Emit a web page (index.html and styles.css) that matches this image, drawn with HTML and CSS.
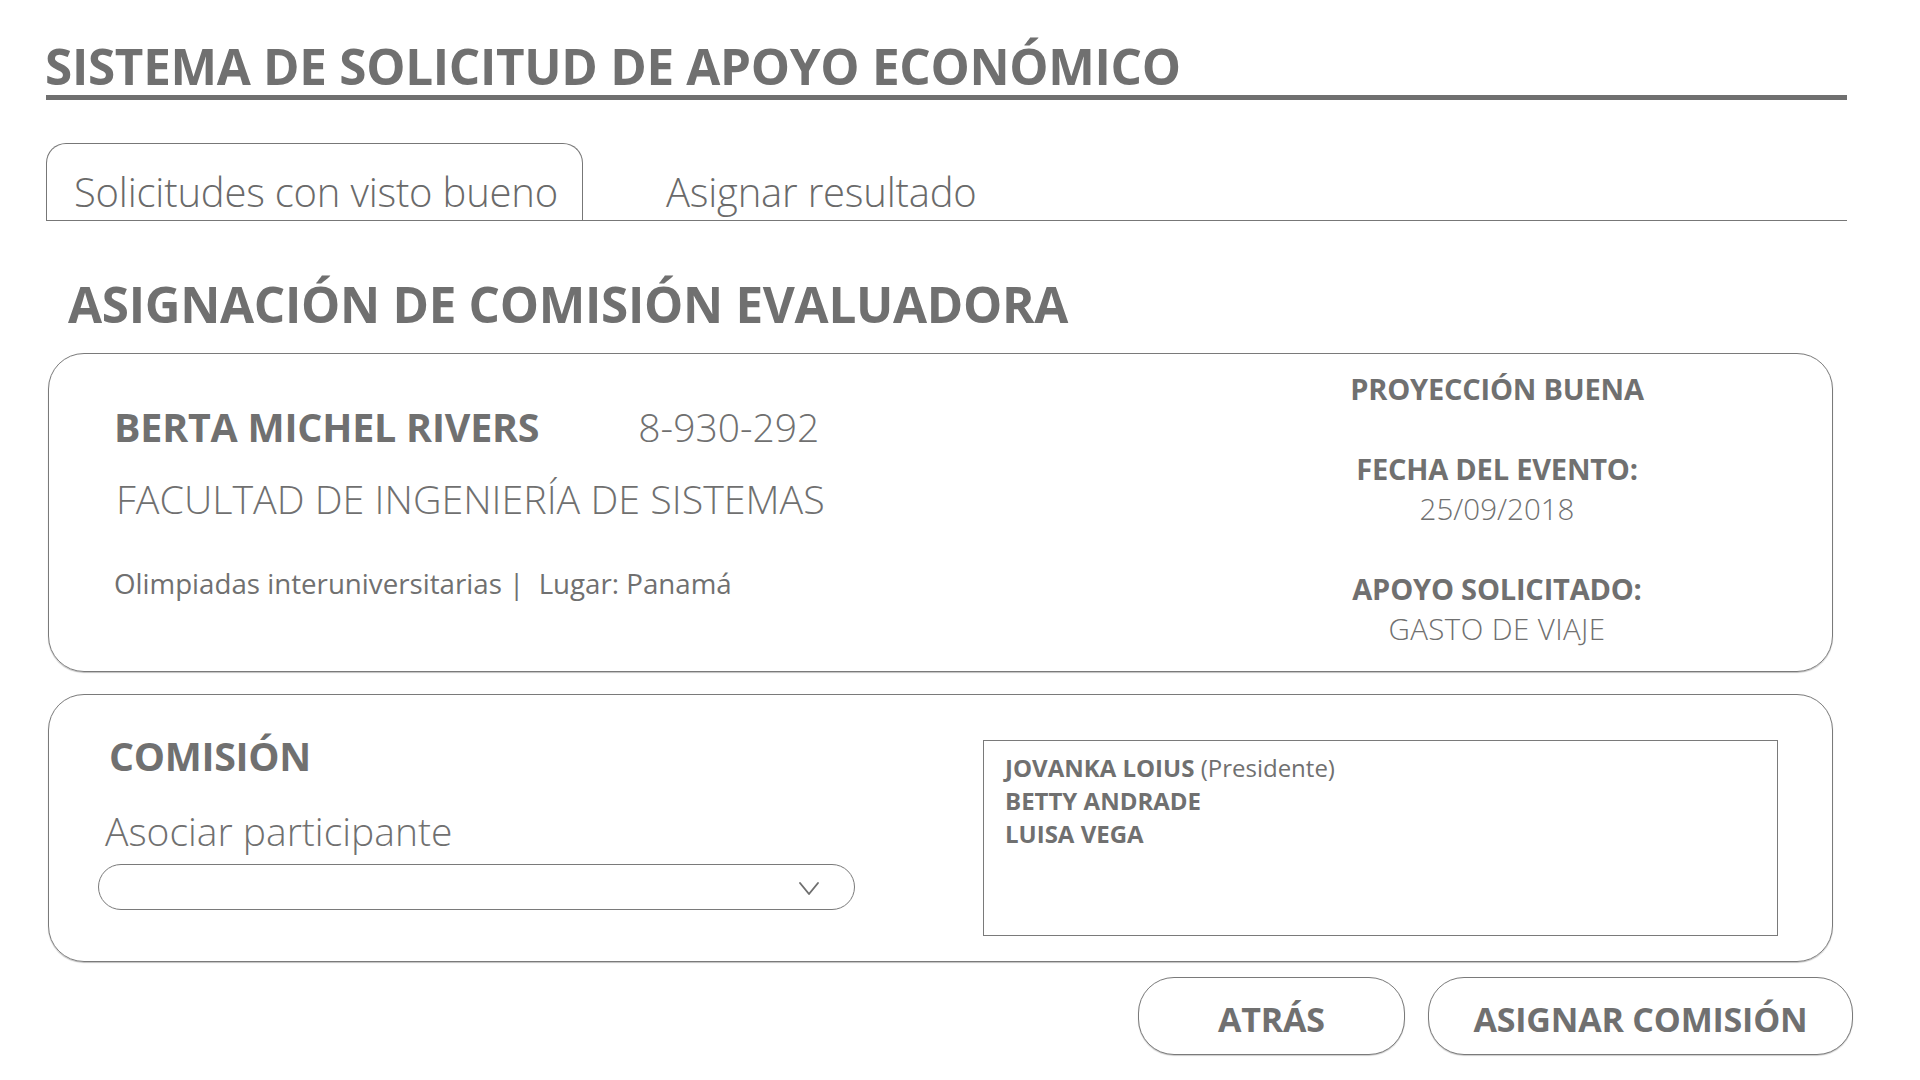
FILE: index.html
```html
<!DOCTYPE html>
<html lang="es">
<head>
<meta charset="utf-8">
<title>Sistema de Solicitud de Apoyo Económico</title>
<link rel="stylesheet" href="styles.css">
</head>
<body>
<div class="page">
  <header class="app-header">
    <h1 class="app-title">SISTEMA DE SOLICITUD DE APOYO ECONÓMICO</h1>
  </header>

  <nav class="tabs">
    <div class="tab tab-active">Solicitudes con visto bueno</div>
    <div class="tab">Asignar resultado</div>
  </nav>

  <h2 class="section-title">ASIGNACIÓN DE COMISIÓN EVALUADORA</h2>

  <section class="card info-card">
    <div class="info-main">
      <div class="person-row">
        <span class="person-name">BERTA MICHEL RIVERS</span>
        <span class="person-id">8-930-292</span>
      </div>
      <div class="faculty">FACULTAD DE INGENIERÍA DE SISTEMAS</div>
      <div class="event">Olimpiadas interuniversitarias |&nbsp; Lugar: Panamá</div>
    </div>
    <div class="info-side">
      <div class="side-group">
        <div class="side-label">PROYECCIÓN BUENA</div>
      </div>
      <div class="side-group">
        <div class="side-label">FECHA DEL EVENTO:</div>
        <div class="side-value">25/09/2018</div>
      </div>
      <div class="side-group">
        <div class="side-label">APOYO SOLICITADO:</div>
        <div class="side-value side-value-wide">GASTO DE VIAJE</div>
      </div>
    </div>
  </section>

  <section class="card commission-card">
    <div class="commission-left">
      <h3 class="commission-title">COMISIÓN</h3>
      <div class="field-label">Asociar participante</div>
      <div class="select">
        <svg class="chevron" width="22" height="16" viewBox="0 0 22 16" aria-hidden="true">
          <path d="M2 3 L11 14 L20 3" fill="none" stroke="#6f6f6f" stroke-width="1.9" stroke-linecap="round" stroke-linejoin="round"/>
        </svg>
      </div>
    </div>
    <div class="member-list">
      <div class="member"><b>JOVANKA LOIUS</b> (Presidente)</div>
      <div class="member"><b>BETTY ANDRADE</b></div>
      <div class="member"><b>LUISA VEGA</b></div>
    </div>
  </section>

  <div class="actions">
    <button class="btn btn-back">ATRÁS</button>
    <button class="btn btn-assign">ASIGNAR COMISIÓN</button>
  </div>
</div>
</body>
</html>
```

FILE: styles.css
```css
* { box-sizing: border-box; }

html, body {
  margin: 0;
  padding: 0;
  background: #ffffff;
}

body {
  font-family: "Open Sans", "Noto Sans", "DejaVu Sans", sans-serif;
  color: #707070;
}

.page {
  width: 1920px;
  height: 1080px;
  padding: 42px 73px 0 46px;
  overflow: hidden;
}

/* Header */
.app-header {
  border-bottom: 5px solid #707070;
  padding-bottom: 5px;
}

.app-title {
  margin: 0 0 0 -1px;
  font-size: 49.4px;
  line-height: 48px;
  font-weight: 700;
  letter-spacing: -0.3px;
  color: #707070;
}

/* Tabs */
.tabs {
  margin-top: 43px;
  display: flex;
  align-items: flex-end;
  border-bottom: 1px solid #777777;
  height: 78px;
}

.tab {
  height: 77px;
  padding: 28px 26px 0 27px;
  font-size: 40px;
  line-height: 40px;
  font-weight: 300;
  color: #6a6a6a;
  letter-spacing: -0.2px;
  white-space: nowrap;
  border: 1px solid transparent;
  border-bottom: none;
}

.tab-active {
  border-color: #777777;
  border-radius: 20px 20px 0 0;
  width: 537px;
}

.tab + .tab {
  padding-left: 82px;
}

/* Section title */
.section-title {
  margin: 57px 0 0 22px;
  font-size: 49.4px;
  line-height: 52px;
  font-weight: 700;
  letter-spacing: -0.3px;
  color: #707070;
}

/* Cards */
.card {
  margin-left: 2px;
  width: 1785px;
  border: 1px solid #7a7a7a;
  border-radius: 36px;
  box-shadow: 0 1px 1px rgba(0,0,0,0.25);
}

.info-card {
  margin-top: 23px;
  height: 319px;
  display: flex;
  justify-content: space-between;
  padding: 0 0 0 65px;
}

.info-main {
  padding-top: 48px;
}

.person-row {
  display: flex;
  align-items: baseline;
  gap: 99px;
}

.person-name {
  font-size: 39.4px;
  line-height: 50px;
  font-weight: 700;
  letter-spacing: -0.2px;
}

.person-id {
  font-size: 39px;
  line-height: 50px;
  font-weight: 300;
}

.faculty {
  margin-top: 22px;
  margin-left: 2px;
  font-size: 39.4px;
  line-height: 50px;
  font-weight: 300;
}

.event {
  margin-top: 41px;
  font-size: 27.7px;
  line-height: 36px;
  font-weight: 400;
}

.info-side {
  width: 420px;
  margin-right: 125px;
  padding-top: 15px;
  text-align: center;
  display: flex;
  flex-direction: column;
  gap: 40px;
}

.side-label {
  font-size: 29px;
  line-height: 40px;
  font-weight: 700;
  letter-spacing: -0.2px;
}

.side-value {
  font-size: 29.5px;
  line-height: 40px;
  font-weight: 300;
}

.side-value-wide {
  letter-spacing: 0.4px;
}

/* Commission */
.commission-card {
  margin-top: 22px;
  height: 268px;
  display: flex;
  justify-content: space-between;
  padding: 0 54px 0 49px;
}

.commission-left {
  width: 757px;
  padding-top: 36px;
}

.commission-title {
  margin: 0 0 0 11px;
  font-size: 39.3px;
  line-height: 50px;
  font-weight: 700;
  letter-spacing: -0.3px;
}

.field-label {
  margin: 27px 0 0 7px;
  font-size: 39px;
  line-height: 46px;
  font-weight: 300;
}

.select {
  margin-top: 10px;
  height: 46px;
  border: 1px solid #7a7a7a;
  border-radius: 23px;
  display: flex;
  align-items: center;
  justify-content: flex-end;
  padding-right: 34px;
}

.chevron {
  display: block;
  margin-top: 2px;
}

.member-list {
  margin-top: 45px;
  width: 795px;
  height: 196px;
  border: 1px solid #7a7a7a;
  padding: 10px 20px 10px 21px;
}

.member {
  font-size: 24px;
  line-height: 33px;
  font-weight: 400;
}

.member b {
  font-weight: 700;
}

/* Actions */
.actions {
  margin-top: 15px;
  margin-right: -6px;
  display: flex;
  justify-content: flex-end;
  gap: 23px;
}

.btn {
  height: 78px;
  border: 1px solid #7a7a7a;
  border-radius: 36px;
  background: #ffffff;
  font-family: inherit;
  font-size: 34px;
  font-weight: 700;
  color: #707070;
  letter-spacing: -0.2px;
  padding: 6px 0 0 0;
  box-shadow: 0 1px 1px rgba(0,0,0,0.2);
}

.btn-back { width: 267px; }
.btn-assign { width: 425px; }
```
